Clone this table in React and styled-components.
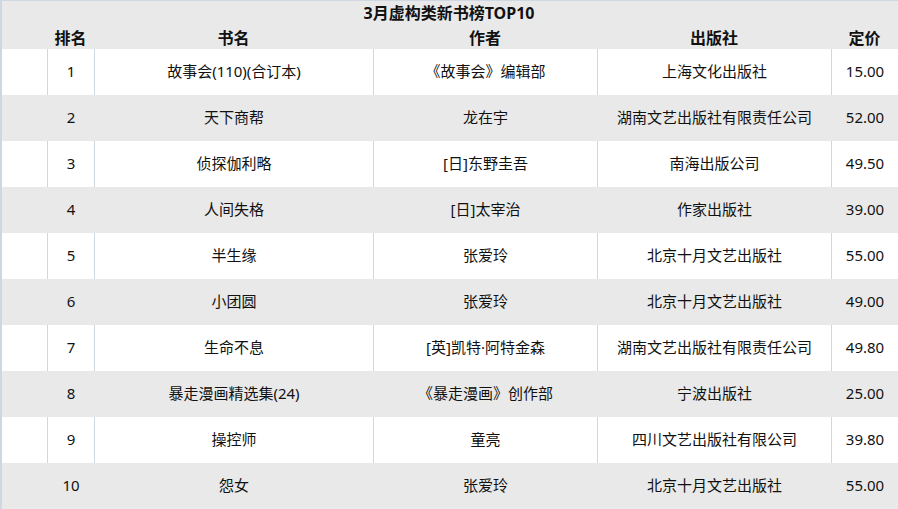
import React from "react";
import styled, { createGlobalStyle } from "styled-components";

const GlobalStyle = createGlobalStyle`
  html, body {
    margin: 0;
    padding: 0;
    background: #e9e9e9;
  }
  * { box-sizing: border-box; }
`;

const books = [
  { rank: 1, title: "故事会(110)(合订本)", author: "《故事会》编辑部", press: "上海文化出版社", price: "15.00" },
  { rank: 2, title: "天下商帮", author: "龙在宇", press: "湖南文艺出版社有限责任公司", price: "52.00" },
  { rank: 3, title: "侦探伽利略", author: "[日]东野圭吾", press: "南海出版公司", price: "49.50" },
  { rank: 4, title: "人间失格", author: "[日]太宰治", press: "作家出版社", price: "39.00" },
  { rank: 5, title: "半生缘", author: "张爱玲", press: "北京十月文艺出版社", price: "55.00" },
  { rank: 6, title: "小团圆", author: "张爱玲", press: "北京十月文艺出版社", price: "49.00" },
  { rank: 7, title: "生命不息", author: "[英]凯特·阿特金森", press: "湖南文艺出版社有限责任公司", price: "49.80" },
  { rank: 8, title: "暴走漫画精选集(24)", author: "《暴走漫画》创作部", press: "宁波出版社", price: "25.00" },
  { rank: 9, title: "操控师", author: "童亮", press: "四川文艺出版社有限公司", price: "39.80" },
  { rank: 10, title: "怨女", author: "张爱玲", press: "北京十月文艺出版社", price: "55.00" },
];

const COLS = "45px 47px 279px 224px 234px 67px";

export default function App() {
  return (
    <>
      <GlobalStyle />
      <Board>
        <Title>3月虚构类新书榜TOP10</Title>
        <HeadRow>
          <span />
          <HeadCell>排名</HeadCell>
          <HeadCell>书名</HeadCell>
          <HeadCell>作者</HeadCell>
          <HeadCell>出版社</HeadCell>
          <HeadCell>定价</HeadCell>
        </HeadRow>
        {books.map((b, i) => {
          const light = i % 2 === 0;
          return (
            <Row key={b.rank} $light={light}>
              <Cell />
              <Cell $line={light}>{b.rank}</Cell>
              <Cell $line={light}>{b.title}</Cell>
              <Cell $line={light}>{b.author}</Cell>
              <Cell $line={light}>{b.press}</Cell>
              <Cell $line={light}>{b.price}</Cell>
            </Row>
          );
        })}
      </Board>
    </>
  );
}

const Board = styled.div`
  width: 898px;
  height: 509px;
  background: #e9e9e9;
  border-top: 1px solid #cfd7e3;
  border-left: 2px solid #cfd7e3;
  font-family: "Noto Sans", "Noto Sans CJK SC", sans-serif;
  color: #111;
  overflow: hidden;
`;

const Title = styled.div`
  height: 24px;
  line-height: 24px;
  margin-left: -2px;
  padding-bottom: 2px;
  text-align: center;
  font-size: 16px;
  font-weight: 700;
`;

const HeadRow = styled.div`
  display: grid;
  grid-template-columns: ${COLS};
  height: 24px;
`;

const HeadCell = styled.div`
  display: flex;
  align-items: center;
  justify-content: center;
  padding-bottom: 2px;
  font-size: 16px;
  font-weight: 700;
`;

const Row = styled.div`
  display: grid;
  grid-template-columns: ${COLS};
  height: 46px;
  background: ${(p) => (p.$light ? "#ffffff" : "#e9e9e9")};
`;

const Cell = styled.div`
  display: flex;
  align-items: center;
  justify-content: center;
  padding-bottom: 3px;
  font-size: 15px;
  white-space: nowrap;
  border-left: 1px solid ${(p) => (p.$line ? "#cfd7e3" : "transparent")};
`;
